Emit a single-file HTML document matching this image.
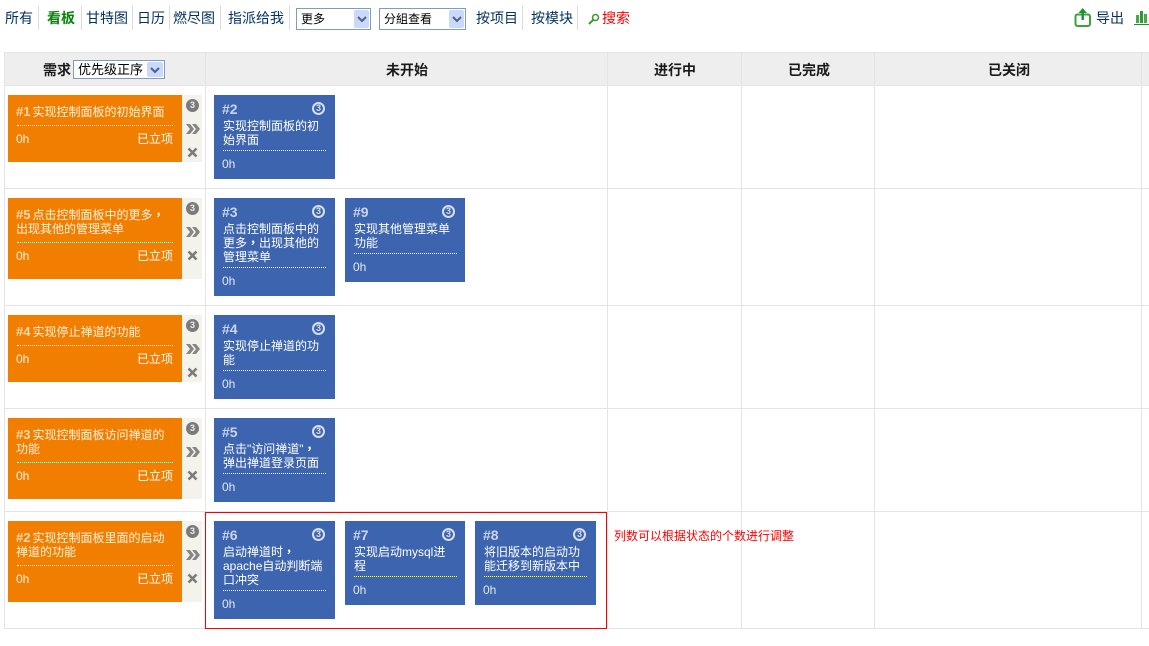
<!DOCTYPE html>
<html lang="zh">
<head>
<meta charset="utf-8">
<title>看板</title>
<style>
html,body{margin:0;padding:0;background:#fff;width:1149px;height:646px;overflow:hidden}
body{position:relative;font-family:"Liberation Sans","WenQuanYi Zen Hei","Noto Sans CJK SC",sans-serif;font-size:12px;color:#000}
div,span,a,svg{position:absolute;display:block;white-space:nowrap}
.n{top:9px;height:18px;line-height:18px;font-size:14px;color:#03315f}
.s{top:6px;width:1px;height:24px;background:#dcdcdc}
.l{background:#e4e4e4}
.h{top:61px;height:18px;line-height:18px;font-size:14px;font-weight:bold;color:#1a1a1a}
.sel{border:1px solid #7f9db9;background:#fff;box-sizing:border-box;color:#000;line-height:20px;font-size:12px}
.sel span{left:4px;top:0}
.sel i{position:absolute;right:1px;top:1px;bottom:1px;width:15px;background:#c9d9fc;border-radius:2px;display:block}
.sel svg{left:3px;top:5px}
.o{position:absolute;left:8px;width:174px;background:#f27e00;color:#fff}
.o .t{left:8px;top:10px;line-height:14px;font-size:12px;color:#fff3e0}
.o b{font-size:13px;color:#fbd9ae;margin-right:2px}
.o .d,.c .d{height:0;border-top:1px dotted #fff}
.o .d{left:9px;width:156px}
.o .e{left:8px;line-height:14px;color:#fff3e0}
.o .f{right:9px;line-height:14px;color:#fff}
.p{left:182px;width:20px;background:#f3f3ec}
.c{background:#3d64ae;color:#fff}
.c .no{left:8px;top:6px;font-size:14px;line-height:16px;font-weight:bold;color:#cad4ea}
.c .ci{right:10px;top:7px;width:9px;height:9px;border:2px solid #d6deef;border-radius:50%;font-size:9px;line-height:9px;text-align:center;color:#d6deef;font-weight:bold}
.c .t{left:9px;top:24px;line-height:14px;font-size:12px}
.c .d{left:9px;width:103px}
.c .e{left:8px;line-height:14px;color:#e3e9f5}
.g{left:186px;width:13px;height:13px;border-radius:50%;background:#7b7b7b;color:#eee;font-size:9px;line-height:13px;text-align:center;font-weight:bold}
em{font-style:normal;font-weight:bold;font-family:"Noto Sans CJK TC",sans-serif;line-height:14px}
</style>
</head>
<body>

<!-- toolbar -->
<a class="n" style="left:5px">所有</a><div class="s" style="left:38px"></div>
<a class="n" style="left:47px;color:#0a830a;font-weight:bold">看板</a><div class="s" style="left:81px"></div>
<a class="n" style="left:86px">甘特图</a><div class="s" style="left:132px"></div>
<a class="n" style="left:137px">日历</a><div class="s" style="left:169px"></div>
<a class="n" style="left:173px">燃尽图</a><div class="s" style="left:220px"></div>
<a class="n" style="left:228px">指派给我</a><div class="s" style="left:289px"></div>

<div class="sel" style="left:296px;top:8px;width:75px;height:22px"><span>更多</span><i><svg width="10" height="8"><path d="M1 2l4 4 4-4" fill="none" stroke="#4d6185" stroke-width="2"/></svg></i></div>
<div class="sel" style="left:379px;top:8px;width:87px;height:22px"><span>分組查看</span><i><svg width="10" height="8"><path d="M1 2l4 4 4-4" fill="none" stroke="#4d6185" stroke-width="2"/></svg></i></div>

<a class="n" style="left:476px">按项目</a><div class="s" style="left:522px"></div>
<a class="n" style="left:531px">按模块</a><div class="s" style="left:577px"></div>
<svg style="left:588px;top:13px" width="12" height="12"><circle cx="7.5" cy="4.5" r="3" fill="none" stroke="#3a9a2c" stroke-width="1.5"/><path d="M5.3 6.8L1 11" stroke="#3a9a2c" stroke-width="2"/></svg>
<a class="n" style="left:602px;color:#f00">搜索</a>

<svg style="left:1074px;top:7px" width="18" height="21"><rect x="1.5" y="7.5" width="14.5" height="11.5" rx="2" fill="none" stroke="#3ea040" stroke-width="2"/><path d="M8.7 13V3" stroke="#1f8f30" stroke-width="2.4"/><path d="M4.5 6L8.7 1l4.2 5z" fill="#1f8f30"/></svg>
<a class="n" style="left:1096px">导出</a>
<svg style="left:1134px;top:10px" width="15" height="15"><rect x="2" y="5" width="3" height="8" fill="#4aa84a"/><rect x="6" y="1" width="3" height="12" fill="#2f9a35"/><rect x="10" y="4" width="3" height="9" fill="#4aa84a"/><rect x="0" y="14" width="15" height="1" fill="#1f8f30"/></svg>

<!-- grid -->
<div style="left:4px;top:52px;width:1145px;height:33px;background:#eee"></div>
<div class="l" style="left:4px;top:52px;width:1145px;height:1px"></div>
<div class="l" style="left:4px;top:85px;width:1145px;height:1px"></div>
<div class="l" style="left:4px;top:188px;width:1145px;height:1px"></div>
<div class="l" style="left:4px;top:305px;width:1145px;height:1px"></div>
<div class="l" style="left:4px;top:408px;width:1145px;height:1px"></div>
<div class="l" style="left:4px;top:511px;width:1145px;height:1px"></div>
<div class="l" style="left:4px;top:628px;width:1145px;height:1px"></div>
<div class="l" style="left:4px;top:52px;width:1px;height:577px"></div>
<div class="l" style="left:205px;top:52px;width:1px;height:577px"></div>
<div class="l" style="left:607px;top:52px;width:1px;height:577px"></div>
<div class="l" style="left:741px;top:52px;width:1px;height:577px"></div>
<div class="l" style="left:874px;top:52px;width:1px;height:577px"></div>
<div class="l" style="left:1141px;top:52px;width:1px;height:577px"></div>

<!-- header -->
<div class="h" style="left:43px">需求</div>
<div class="sel" style="left:73px;top:60px;width:92px;height:19px;line-height:17px;font-size:13px"><span>优先级正序</span><i style="width:16px"><svg width="10" height="8" style="left:3px;top:4px"><path d="M1 2l4 4 4-4" fill="none" stroke="#4d6185" stroke-width="2"/></svg></i></div>
<div class="h" style="left:386px">未开始</div>
<div class="h" style="left:654px">进行中</div>
<div class="h" style="left:788px">已完成</div>
<div class="h" style="left:988px">已关闭</div>

<!-- row 1 -->
<div class="o" style="top:95px;height:67px"><div class="t"><b>#1</b>实现控制面板的初始界面</div><div class="d" style="top:30px"></div><div class="e" style="top:37px">0h</div><div class="f" style="top:37px">已立项</div></div>
<div class="p" style="top:95px;height:67px"></div>
<div class="g" style="top:99px">3</div>
<svg style="left:186px;top:124px" width="14" height="10"><path d="M0 0h4l4 5-4 5H0l4-5zM6 0h4l4 5-4 5H6l4-5z" fill="#858585"/></svg>
<svg style="left:187px;top:147px" width="11" height="11"><path d="M1.5 1.5l8 8M9.5 1.5l-8 8" stroke="#7b7b7b" stroke-width="2.6"/></svg>

<div class="c" style="left:214px;top:95px;width:121px;height:84px"><div class="no">#2</div><div class="ci">3</div><div class="t">实现控制面板的初<br>始界面</div><div class="d" style="top:55px"></div><div class="e" style="top:62px">0h</div></div>

<!-- row 2 -->
<div class="o" style="top:198px;height:81px"><div class="t"><b>#5</b>点击控制面板中的更多<em lang="zh-TW">，</em><br>出现其他的管理菜单</div><div class="d" style="top:44px"></div><div class="e" style="top:51px">0h</div><div class="f" style="top:51px">已立项</div></div>
<div class="p" style="top:198px;height:81px"></div>
<div class="g" style="top:202px">3</div>
<svg style="left:186px;top:227px" width="14" height="10"><path d="M0 0h4l4 5-4 5H0l4-5zM6 0h4l4 5-4 5H6l4-5z" fill="#858585"/></svg>
<svg style="left:187px;top:250px" width="11" height="11"><path d="M1.5 1.5l8 8M9.5 1.5l-8 8" stroke="#7b7b7b" stroke-width="2.6"/></svg>

<div class="c" style="left:214px;top:198px;width:121px;height:98px"><div class="no">#3</div><div class="ci">3</div><div class="t">点击控制面板中的<br>更多<em lang="zh-TW">，</em>出现其他的<br>管理菜单</div><div class="d" style="top:69px"></div><div class="e" style="top:76px">0h</div></div>
<div class="c" style="left:345px;top:198px;width:120px;height:84px"><div class="no">#9</div><div class="ci">3</div><div class="t">实现其他管理菜单<br>功能</div><div class="d" style="top:55px"></div><div class="e" style="top:62px">0h</div></div>

<!-- row 3 -->
<div class="o" style="top:315px;height:67px"><div class="t"><b>#4</b>实现停止禅道的功能</div><div class="d" style="top:30px"></div><div class="e" style="top:37px">0h</div><div class="f" style="top:37px">已立项</div></div>
<div class="p" style="top:315px;height:67px"></div>
<div class="g" style="top:319px">3</div>
<svg style="left:186px;top:344px" width="14" height="10"><path d="M0 0h4l4 5-4 5H0l4-5zM6 0h4l4 5-4 5H6l4-5z" fill="#858585"/></svg>
<svg style="left:187px;top:367px" width="11" height="11"><path d="M1.5 1.5l8 8M9.5 1.5l-8 8" stroke="#7b7b7b" stroke-width="2.6"/></svg>

<div class="c" style="left:214px;top:315px;width:121px;height:84px"><div class="no">#4</div><div class="ci">3</div><div class="t">实现停止禅道的功<br>能</div><div class="d" style="top:55px"></div><div class="e" style="top:62px">0h</div></div>

<!-- row 4 -->
<div class="o" style="top:418px;height:81px"><div class="t"><b>#3</b>实现控制面板访问禅道的<br>功能</div><div class="d" style="top:44px"></div><div class="e" style="top:51px">0h</div><div class="f" style="top:51px">已立项</div></div>
<div class="p" style="top:418px;height:81px"></div>
<div class="g" style="top:422px">3</div>
<svg style="left:186px;top:447px" width="14" height="10"><path d="M0 0h4l4 5-4 5H0l4-5zM6 0h4l4 5-4 5H6l4-5z" fill="#858585"/></svg>
<svg style="left:187px;top:470px" width="11" height="11"><path d="M1.5 1.5l8 8M9.5 1.5l-8 8" stroke="#7b7b7b" stroke-width="2.6"/></svg>

<div class="c" style="left:214px;top:418px;width:121px;height:84px"><div class="no">#5</div><div class="ci">3</div><div class="t">点击"访问禅道"<em lang="zh-TW">，</em><br>弹出禅道登录页面</div><div class="d" style="top:55px"></div><div class="e" style="top:62px">0h</div></div>

<!-- row 5 -->
<div class="o" style="top:521px;height:81px"><div class="t"><b>#2</b>实现控制面板里面的启动<br>禅道的功能</div><div class="d" style="top:44px"></div><div class="e" style="top:51px">0h</div><div class="f" style="top:51px">已立项</div></div>
<div class="p" style="top:521px;height:81px"></div>
<div class="g" style="top:525px">3</div>
<svg style="left:186px;top:550px" width="14" height="10"><path d="M0 0h4l4 5-4 5H0l4-5zM6 0h4l4 5-4 5H6l4-5z" fill="#858585"/></svg>
<svg style="left:187px;top:573px" width="11" height="11"><path d="M1.5 1.5l8 8M9.5 1.5l-8 8" stroke="#7b7b7b" stroke-width="2.6"/></svg>

<div class="c" style="left:214px;top:521px;width:121px;height:98px"><div class="no">#6</div><div class="ci">3</div><div class="t">启动禅道时<em lang="zh-TW">，</em><br>apache自动判断端<br>口冲突</div><div class="d" style="top:69px"></div><div class="e" style="top:76px">0h</div></div>
<div class="c" style="left:345px;top:521px;width:120px;height:84px"><div class="no">#7</div><div class="ci">3</div><div class="t">实现启动mysql进<br>程</div><div class="d" style="top:55px"></div><div class="e" style="top:62px">0h</div></div>
<div class="c" style="left:475px;top:521px;width:121px;height:84px"><div class="no">#8</div><div class="ci">3</div><div class="t">将旧版本的启动功<br>能迁移到新版本中</div><div class="d" style="top:55px"></div><div class="e" style="top:62px">0h</div></div>

<!-- annotation -->
<div style="left:205px;top:512px;width:400px;height:115px;border:1px solid #f00"></div>
<div style="left:614px;top:529px;line-height:14px;color:#f00">列数可以根据状态的个数进行调整</div>

</body>
</html>
